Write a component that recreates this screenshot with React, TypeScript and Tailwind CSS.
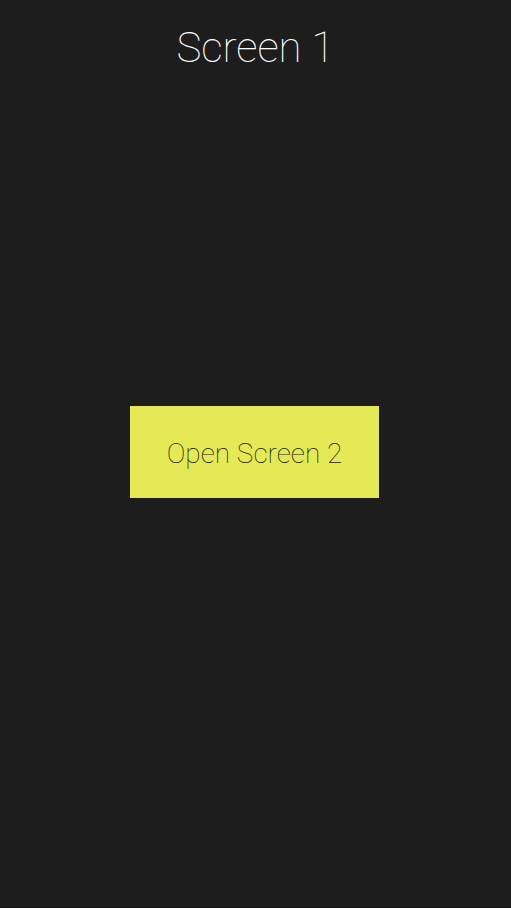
export default function App() {
  return (
    <div
      className="flex h-[908px] w-full flex-col bg-[#1d1d1d] border-b border-[#141414]"
      style={{ fontFamily: "Roboto, 'Noto Sans', sans-serif" }}
    >
      <div className="flex h-[72px] justify-center pt-[24px]">
        <h1 className="text-[42px] font-thin leading-[48px] text-white">Screen 1</h1>
      </div>
      <div className="flex flex-1 items-center justify-center pb-[76px]">
        <button className="ml-[-2px] flex h-[92px] w-[249px] items-center justify-center bg-[#e5e955] pt-[4px] text-[28px] font-thin text-[#161616]">
          Open Screen 2
        </button>
      </div>
    </div>
  );
}
